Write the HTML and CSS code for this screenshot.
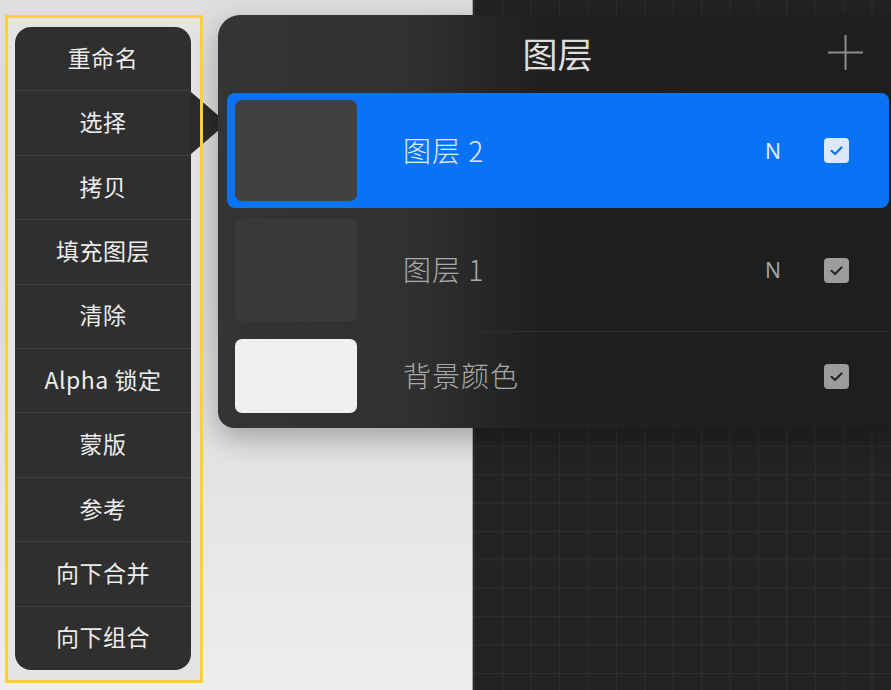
FILE: index.html
```html
<!DOCTYPE html>
<html lang="zh-CN">
<head>
<meta charset="utf-8">
<title>图层</title>
<link rel="stylesheet" href="styles.css">
</head>
<body>
<div class="screen">
  <div class="paper">
    <div class="highlight">
      <ul class="menu">
        <li class="menu-item">重命名</li>
        <li class="menu-item is-active">选择</li>
        <li class="menu-item">拷贝</li>
        <li class="menu-item">填充图层</li>
        <li class="menu-item">清除</li>
        <li class="menu-item">Alpha 锁定</li>
        <li class="menu-item">蒙版</li>
        <li class="menu-item">参考</li>
        <li class="menu-item">向下合并</li>
        <li class="menu-item">向下组合</li>
      </ul>
    </div>
  </div>
  <div class="canvas"></div>

  <section class="layers">
    <header class="layers-head">
      <span></span>
      <h1 class="layers-title">图层</h1>
      <svg class="plus" viewBox="0 0 35 35" aria-hidden="true">
        <path d="M17.5 0 V35 M0 17.5 H35" stroke="#8c8c8c" stroke-width="2" fill="none"/>
      </svg>
    </header>
    <div class="layer-list">
      <div class="layer is-selected">
        <div class="thumb thumb-dark"></div>
        <span class="layer-name">图层 2</span>
        <span class="blend">N</span>
        <span class="check">
          <svg viewBox="0 0 25 25"><path d="M7.5 12.8 L11 16 L17.5 9.5" fill="none" stroke="currentColor" stroke-width="2.2" stroke-linecap="round" stroke-linejoin="round"/></svg>
        </span>
      </div>
      <div class="layer layer-mid">
        <div class="thumb thumb-empty"></div>
        <span class="layer-name">图层 1</span>
        <span class="blend">N</span>
        <span class="check">
          <svg viewBox="0 0 25 25"><path d="M7.5 12.8 L11 16 L17.5 9.5" fill="none" stroke="currentColor" stroke-width="2.2" stroke-linecap="round" stroke-linejoin="round"/></svg>
        </span>
      </div>
      <div class="layer layer-bg">
        <div class="thumb thumb-white"></div>
        <span class="layer-name">背景颜色</span>
        <span class="blend"></span>
        <span class="check">
          <svg viewBox="0 0 25 25"><path d="M7.5 12.8 L11 16 L17.5 9.5" fill="none" stroke="currentColor" stroke-width="2.2" stroke-linecap="round" stroke-linejoin="round"/></svg>
        </span>
      </div>
    </div>
  </section>
</div>
</body>
</html>
```

FILE: styles.css
```css
html, body {
  margin: 0;
  padding: 0;
}
body {
  background: #e5e5e5;
  font-family: "Noto Sans CJK SC", "Noto Sans", sans-serif;
}
.screen {
  position: relative;
  display: flex;
  width: 891px;
  height: 690px;
  overflow: hidden;
}

/* light paper area */
.paper {
  width: 472px;
  flex: none;
  border-right: 1px solid #a8a8a8;
  background: linear-gradient(to bottom, #dedede 0%, #d9d9d9 40%, #e6e6e6 75%, #eeeeee 100%);
}
.highlight {
  position: relative;
  box-sizing: border-box;
  width: 198px;
  height: 668px;
  margin: 15px 0 0 5px;
  padding: 12px 12px 13px 10px;
  background: #e4e4e4;
}
.highlight::after {
  content: "";
  position: absolute;
  inset: 0;
  border: 3px solid #fcd232;
  pointer-events: none;
  z-index: 3;
}
.menu {
  list-style: none;
  margin: 0;
  padding: 0;
  height: 100%;
  display: flex;
  flex-direction: column;
  background: #2f2f2f;
  border-radius: 16px;
}
.menu-item {
  position: relative;
  flex: 1;
  display: flex;
  align-items: center;
  justify-content: center;
  padding-bottom: 4px;
  color: #ececec;
  font-size: 23px;
  font-weight: 400;
  letter-spacing: 0.5px;
  border-top: 1px solid #3f3f3f;
}
.menu-item:first-child {
  border-top: 0;
}
.menu-item.is-active::after {
  content: "";
  position: absolute;
  left: 100%;
  top: 1px;
  width: 0;
  height: 0;
  border-left: 36px solid #2b2b2b;
  border-top: 31px solid transparent;
  border-bottom: 31px solid transparent;
  z-index: 1;
}

/* dark canvas */
.canvas {
  flex: 1;
  background-color: #232323;
  background-image:
    linear-gradient(to right, #303030 1px, transparent 1px),
    linear-gradient(to bottom, #2f2f2f 1px, transparent 1px);
  background-size: 28.4px 28.4px;
  background-position: 1px 20px;
}

/* layers popover */
.layers {
  position: absolute;
  left: 218px;
  top: 15px;
  width: 679px;
  height: 413px;
  border-radius: 22px 0 0 16px;
  background: linear-gradient(to right, #343434 0px, #313131 190px, #262626 270px, #202020 320px, #1e1e1e 100%);
  box-shadow: 0 10px 28px rgba(0, 0, 0, 0.28);
  z-index: 2;
}
.layers-head {
  height: 78px;
  display: grid;
  grid-template-columns: 1fr auto 1fr;
  align-items: center;
}
.layers-title {
  margin: 0 0 4px;
  font-size: 35px;
  font-weight: 400;
  color: #dedede;
  line-height: 1;
}
.plus {
  justify-self: end;
  width: 35px;
  height: 35px;
  margin: 0 34px 4px 0;
}
.layer-list {
  padding: 0 8px 0 9px;
}
.layer {
  box-sizing: border-box;
  display: flex;
  align-items: center;
  padding: 7px 8px;
  border-radius: 8px;
}
.layer.is-selected {
  height: 115px;
  margin-bottom: 4px;
  background: #0a72f5;
}
.layer-mid {
  height: 120px;
  padding-bottom: 10px;
  border-radius: 0;
  border-bottom: 1px solid #2e2e2e;
}
.layer-bg {
  height: 96px;
  padding-bottom: 15px;
}
.thumb {
  flex: none;
  width: 122px;
  align-self: stretch;
  border-radius: 7px;
}
.thumb-dark { background: #414141; }
.thumb-empty { background: #3a3a3a; }
.thumb-white { background: #f0f0f0; }
.layer-name {
  flex: 1;
  margin-left: 46px;
  padding-bottom: 2px;
  font-size: 28px;
  font-weight: 300;
  letter-spacing: 1px;
  color: #a9a9a9;
}
.blend {
  width: 16px;
  margin-right: 43px;
  text-align: center;
  font-family: "Noto Sans", sans-serif;
  font-size: 21px;
  color: #a3a3a3;
}
.check {
  flex: none;
  width: 25px;
  height: 25px;
  margin-right: 32px;
  border-radius: 4px;
  background: #9c9c9c;
  color: #262626;
  display: flex;
}
.check svg {
  width: 25px;
  height: 25px;
}
.is-selected .layer-name,
.is-selected .blend {
  color: #e2ebfd;
}
.is-selected .check {
  background: #dce7fa;
  color: #0a72f5;
}
```
